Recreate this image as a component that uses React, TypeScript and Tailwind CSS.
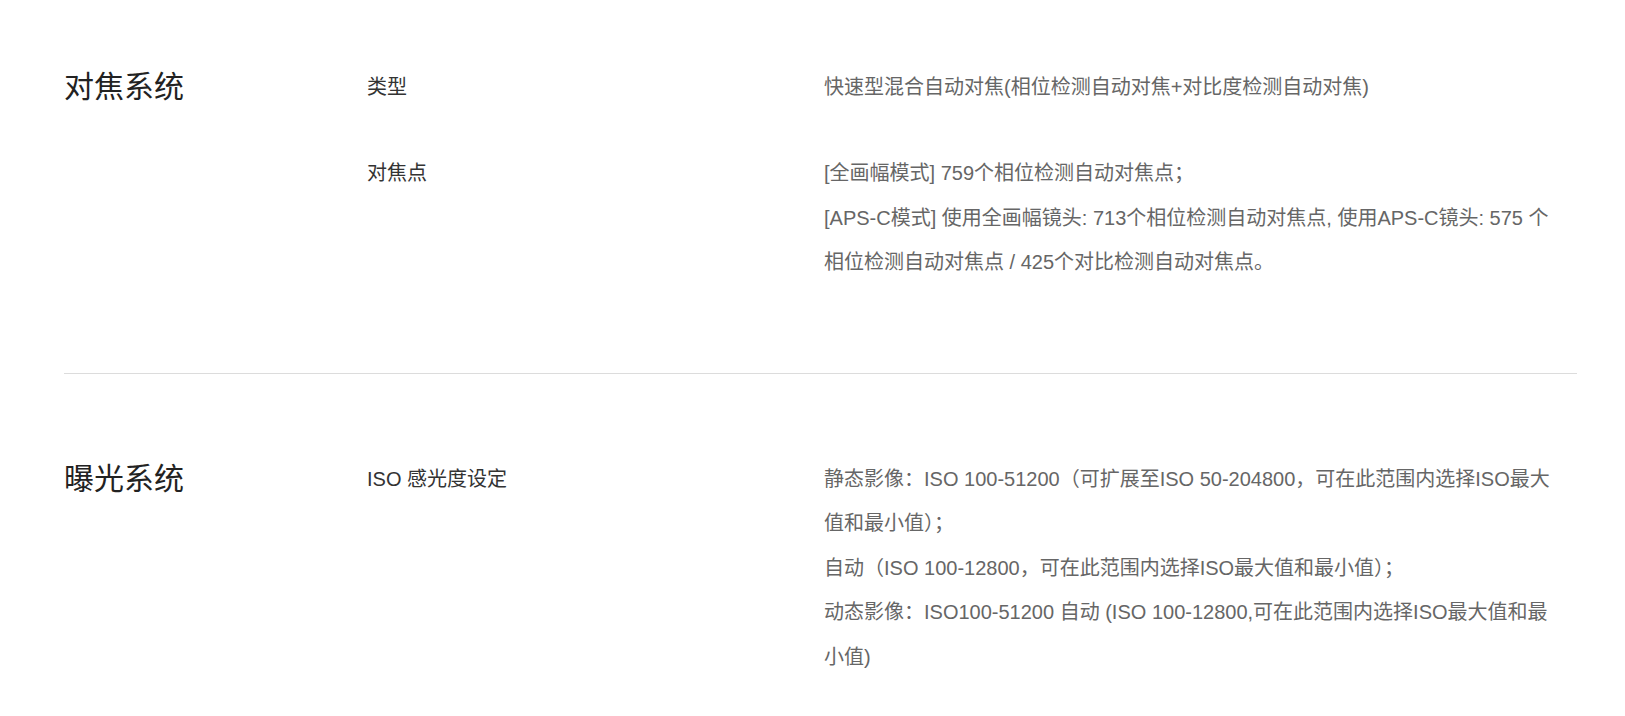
import React from "react";

const font = {
  fontFamily: '"Liberation Sans", "Noto Sans CJK SC", sans-serif',
};

type Item = { label: string; lines: string[] };

function Row({ item }: { item: Item }) {
  return (
    <div className="flex">
      <div className="w-[457px] shrink-0 text-[20px] leading-[44.5px] text-[#333]">{item.label}</div>
      <div className="flex-1 text-[20px] leading-[44.5px] text-[#666]">
        {item.lines.map((l, i) => (
          <div key={i} className="whitespace-nowrap">
            {l}
          </div>
        ))}
      </div>
    </div>
  );
}

function Section({
  title,
  items,
  className,
}: {
  title: string;
  items: Item[];
  className: string;
}) {
  return (
    <section className={"flex " + className}>
      <div className="w-[303px] shrink-0 text-[30px] leading-[44.5px] text-[#222]">{title}</div>
      <div className="flex flex-1 flex-col gap-[41.5px]">
        {items.map((it, i) => (
          <Row key={i} item={it} />
        ))}
      </div>
    </section>
  );
}

export default function App() {
  return (
    <div className="min-h-screen bg-white" style={font}>
      <div className="ml-[64px] w-[1513px]">
        <Section
          title="对焦系统"
          className="pt-[65px] pb-[88px] border-b border-[#dcdcdc]"
          items={[
            {
              label: "类型",
              lines: ["快速型混合自动对焦(相位检测自动对焦+对比度检测自动对焦)"],
            },
            {
              label: "对焦点",
              lines: [
                "[全画幅模式] 759个相位检测自动对焦点；",
                "[APS-C模式] 使用全画幅镜头: 713个相位检测自动对焦点, 使用APS-C镜头: 575 个",
                "相位检测自动对焦点 / 425个对比检测自动对焦点。",
              ],
            },
          ]}
        />
        <Section
          title="曝光系统"
          className="pt-[83px] pb-[40px]"
          items={[
            {
              label: "ISO 感光度设定",
              lines: [
                "静态影像：ISO 100-51200（可扩展至ISO 50-204800，可在此范围内选择ISO最大",
                "值和最小值）；",
                "自动（ISO 100-12800，可在此范围内选择ISO最大值和最小值）；",
                "动态影像：ISO100-51200 自动 (ISO 100-12800,可在此范围内选择ISO最大值和最",
                "小值)",
              ],
            },
          ]}
        />
      </div>
    </div>
  );
}
